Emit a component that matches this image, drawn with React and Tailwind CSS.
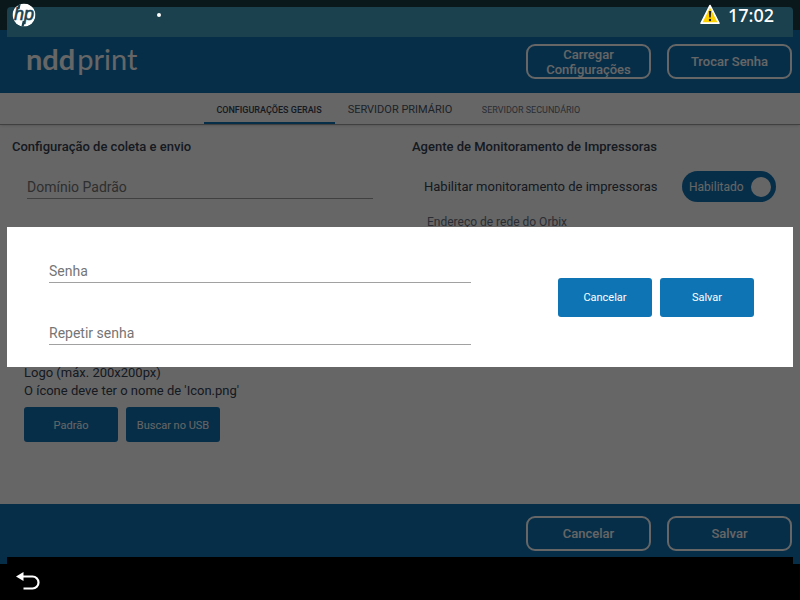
import React, { useState } from "react";

const tabs = [
  { id: "gerais", label: "CONFIGURAÇÕES GERAIS", style: "text-[9px] font-medium text-gray-700" },
  { id: "primario", label: "SERVIDOR PRIMÁRIO", style: "text-[11px] text-gray-600" },
  { id: "secundario", label: "SERVIDOR SECUNDÁRIO", style: "text-[9px] text-gray-500" },
];

export default function App() {
  const [tab, setTab] = useState("gerais");
  const [habilitado, setHabilitado] = useState(true);

  return (
    <div className="relative flex min-h-screen flex-col bg-white font-['Roboto',sans-serif]">
      <div className="h-[30px] bg-[#1a3c47]" />

      <header className="flex items-center justify-between bg-[#0f74b4] py-[14px] pr-2 pl-[26px]">
        <Logo />
        <div className="flex gap-4">
          <OutlineButton>Carregar Configurações</OutlineButton>
          <OutlineButton>Trocar Senha</OutlineButton>
        </div>
      </header>

      <nav className="flex h-8 justify-center border-b border-neutral-400 shadow">
        {tabs.map(t => (
          <button
            key={t.id}
            onClick={() => setTab(t.id)}
            className={`w-[131px] overflow-hidden border-b-2 pt-1.5 text-center whitespace-nowrap ${t.style} ${tab === t.id ? "border-[#0f74b4]" : "border-transparent"}`}
          >
            {t.label}
          </button>
        ))}
      </nav>

      <main className="grid flex-1 grid-cols-2 text-[13px] text-gray-700">
        <section className="flex flex-col px-3 pt-3 pb-[62px]">
          <h2 className="leading-5 font-medium">Configuração de coleta e envio</h2>
          <div className="mt-[18px] px-[15px]">
            <Field id="dominio" label="Domínio Padrão" />
          </div>
          <div className="mt-auto pl-3 leading-[18px]">
            <p>Logo (máx. 200x200px)</p>
            <p>O ícone deve ter o nome de 'Icon.png'</p>
            <div className="mt-[7px] flex gap-2">
              <SolidButton>Padrão</SolidButton>
              <SolidButton>Buscar no USB</SolidButton>
            </div>
          </div>
        </section>

        <section className="px-3 pt-3">
          <h2 className="leading-5 font-medium">Agente de Monitoramento de Impressoras</h2>
          <div className="mt-[14px] flex items-center justify-between pr-3 pl-3">
            <span>Habilitar monitoramento de impressoras</span>
            <label className="flex h-[31px] w-[94px] items-center justify-between rounded-full bg-[#0f74b4] pr-[5px] pl-[7px] text-xs text-white">
              Habilitado
              <input
                type="checkbox"
                checked={habilitado}
                onChange={e => setHabilitado(e.target.checked)}
                className="h-5 w-5 appearance-none rounded-full bg-white"
              />
            </label>
          </div>
          <p className="mt-3 pl-[15px] text-xs text-gray-500">Endereço de rede do Orbix</p>
        </section>
      </main>

      <footer className="flex justify-end gap-4 bg-[#0f74b4] pt-3 pr-2 pb-[13px]">
        <OutlineButton>Cancelar</OutlineButton>
        <OutlineButton>Salvar</OutlineButton>
      </footer>
      <div className="h-9 bg-black" />

      <PasswordDialog />
      <SystemBars />
    </div>
  );
}

function PasswordDialog() {
  return (
    <div className="absolute inset-0 flex flex-col bg-black/60 px-[7px] pt-[7px]">
      <div className="h-[30px] rounded-t bg-[#1a414d]" />
      <div className="flex flex-1 items-center">
        <form role="dialog" className="flex h-[140px] flex-1 items-center justify-between bg-white pr-[39px] pl-[42px]" onSubmit={e => e.preventDefault()}>
          <div className="flex w-[422px] flex-col gap-[38px] pt-[10px]">
            <Field id="senha" label="Senha" type="password" />
            <Field id="repetir" label="Repetir senha" type="password" />
          </div>
          <div className="flex gap-2">
            <SolidButton tall>Cancelar</SolidButton>
            <SolidButton tall>Salvar</SolidButton>
          </div>
        </form>
      </div>
      <div className="h-[43px] bg-black" />
    </div>
  );
}

function SystemBars() {
  return (
    <>
      <div className="absolute inset-x-0 top-0 flex h-[29px] items-center justify-between pr-[26px] pl-3">
        <div className="flex items-center gap-[121px]">
          <HpLogo />
          <span className="h-1 w-1 rounded-full bg-white" />
        </div>
        <div className="flex items-center gap-2">
          <WarningIcon />
          <span className="font-['Noto_Sans',sans-serif] text-lg leading-none font-medium text-white">17:02</span>
        </div>
      </div>
      <button aria-label="Voltar" className="absolute bottom-2 left-4">
        <svg width="24" height="22" viewBox="0 0 24 22" fill="none">
          <path d="M0 6.5 L7.5 2 V11 Z" fill="#fff" />
          <path d="M6 6.5 H16.5 A5.8 5.8 0 0 1 16.5 18.5 H7.5" stroke="#fff" strokeWidth="2.2" />
        </svg>
      </button>
    </>
  );
}

function Field({ id, label, type = "text" }) {
  return (
    <div>
      <label htmlFor={id} className="hidden">{label}</label>
      <input
        id={id}
        type={type}
        placeholder={label}
        className="block w-full border-b border-neutral-400 bg-transparent pt-0.5 text-sm/[21px] text-gray-700 outline-none placeholder:text-[#757575]"
      />
    </div>
  );
}

function OutlineButton({ children }) {
  return (
    <button className="h-[35px] w-[125px] rounded-[9px] border-2 border-white text-[13px] leading-[15px] font-medium text-white">
      {children}
    </button>
  );
}

function SolidButton({ tall, children }) {
  return (
    <button className={`w-[94px] rounded-[3px] bg-[#0f74b4] pt-0.5 text-[11px] text-white ${tall ? "h-[39px]" : "h-[35px]"}`}>
      {children}
    </button>
  );
}

function Logo() {
  return (
    <div className="flex gap-0.5 pb-1.5 font-['Lato',sans-serif] text-[29px] leading-none text-white">
      <span className="font-bold">ndd</span>
      <span>print</span>
    </div>
  );
}

function HpLogo() {
  return (
    <svg width="24" height="24" viewBox="0 0 24 24" role="img" aria-label="HP">
      <clipPath id="hp-disc">
        <circle cx="12" cy="12" r="11.5" />
      </clipPath>
      <g clipPath="url(#hp-disc)">
        <circle cx="12" cy="12" r="11.5" fill="#fff" />
        <text x="2" y="17" fill="#1a414d" stroke="#1a414d" strokeWidth="0.6" fontFamily="Liberation Sans" fontSize="18" fontStyle="italic">hp</text>
        <path d="M7.8 0 L6.4 6 M11.8 18 L10.4 24" stroke="#1a414d" strokeWidth="2.2" />
      </g>
    </svg>
  );
}

function WarningIcon() {
  return (
    <svg width="20" height="21" viewBox="0 0 20 21">
      <path d="M10 1.6 L18.8 19.2 H1.2 Z" fill="#ffd200" stroke="#fff" strokeWidth="1.8" strokeLinejoin="round" />
      <path d="M8.8 7 H11.2 L10.7 13.6 H9.3 Z" fill="#222" />
      <circle cx="10" cy="16" r="1.2" fill="#222" />
    </svg>
  );
}
